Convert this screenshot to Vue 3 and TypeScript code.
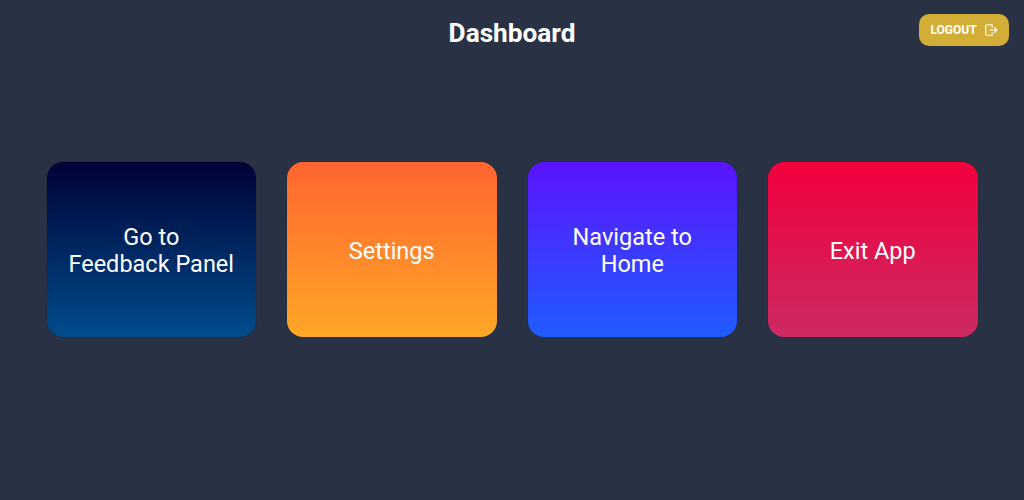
<script setup lang="ts">
const cards = [
  { id: 'feedback', lines: ['Go to', 'Feedback Panel'] },
  { id: 'settings', lines: ['Settings'] },
  { id: 'home', lines: ['Navigate to', 'Home'] },
  { id: 'exit', lines: ['Exit App'] },
]
</script>

<template>
  <div class="page">
    <header class="header">
      <h1 class="title">Dashboard</h1>
      <button class="logout">
        LOGOUT
        <svg class="logout-icon" viewBox="0 0 24 24" fill="none" stroke="currentColor" stroke-width="2" stroke-linecap="round" stroke-linejoin="round">
          <path d="M14 7V3H5a2 2 0 0 0-2 2v14a2 2 0 0 0 2 2h9v-4" />
          <path d="M10 12h12" />
          <path d="M18 8l4 4-4 4" />
        </svg>
      </button>
    </header>
    <main class="cards">
      <div v-for="card in cards" :key="card.id" class="card" :class="card.id">
        <span v-for="line in card.lines" :key="line">{{ line }}</span>
      </div>
    </main>
  </div>
</template>

<style scoped>
.page {
  position: relative;
  width: 1024px;
  height: 500px;
  background: #293245;
  font-family: Roboto, sans-serif;
  color: #fff;
  overflow: hidden;
}

.header {
  height: 64px;
  display: flex;
  align-items: center;
  justify-content: center;
}

.title {
  margin: 1px 0 0;
  font-size: 26.2px;
  font-weight: 700;
  line-height: 30px;
}

.logout {
  position: absolute;
  top: 14px;
  right: 15px;
  width: 90px;
  height: 32px;
  display: flex;
  align-items: center;
  justify-content: center;
  gap: 7px;
  padding: 0;
  border: none;
  border-radius: 10px;
  background: #d3ae36;
  color: #fff;
  font-family: Roboto, sans-serif;
  font-size: 12px;
  font-weight: 700;
}

.logout-icon {
  width: 14px;
  height: 14px;
}

.cards {
  display: flex;
  justify-content: center;
  gap: 31px;
  padding-top: 98px;
}

.card {
  width: 209.5px;
  height: 175px;
  box-sizing: border-box;
  display: flex;
  flex-direction: column;
  align-items: center;
  justify-content: center;
  padding-top: 3px;
  border-radius: 16px;
  box-shadow: 0 0 0 0.5px rgba(10, 14, 30, 0.25);
  font-size: 23.5px;
  line-height: 27px;
  text-align: center;
}

.feedback {
  background: linear-gradient(180deg, #000235, #004c8c);
}

.settings {
  background: linear-gradient(180deg, #ff6530, #ffa726);
}

.home {
  background: linear-gradient(180deg, #5b14ff, #205cff);
}

.exit {
  background: linear-gradient(180deg, #f2003c, #cc2a63);
}
</style>
